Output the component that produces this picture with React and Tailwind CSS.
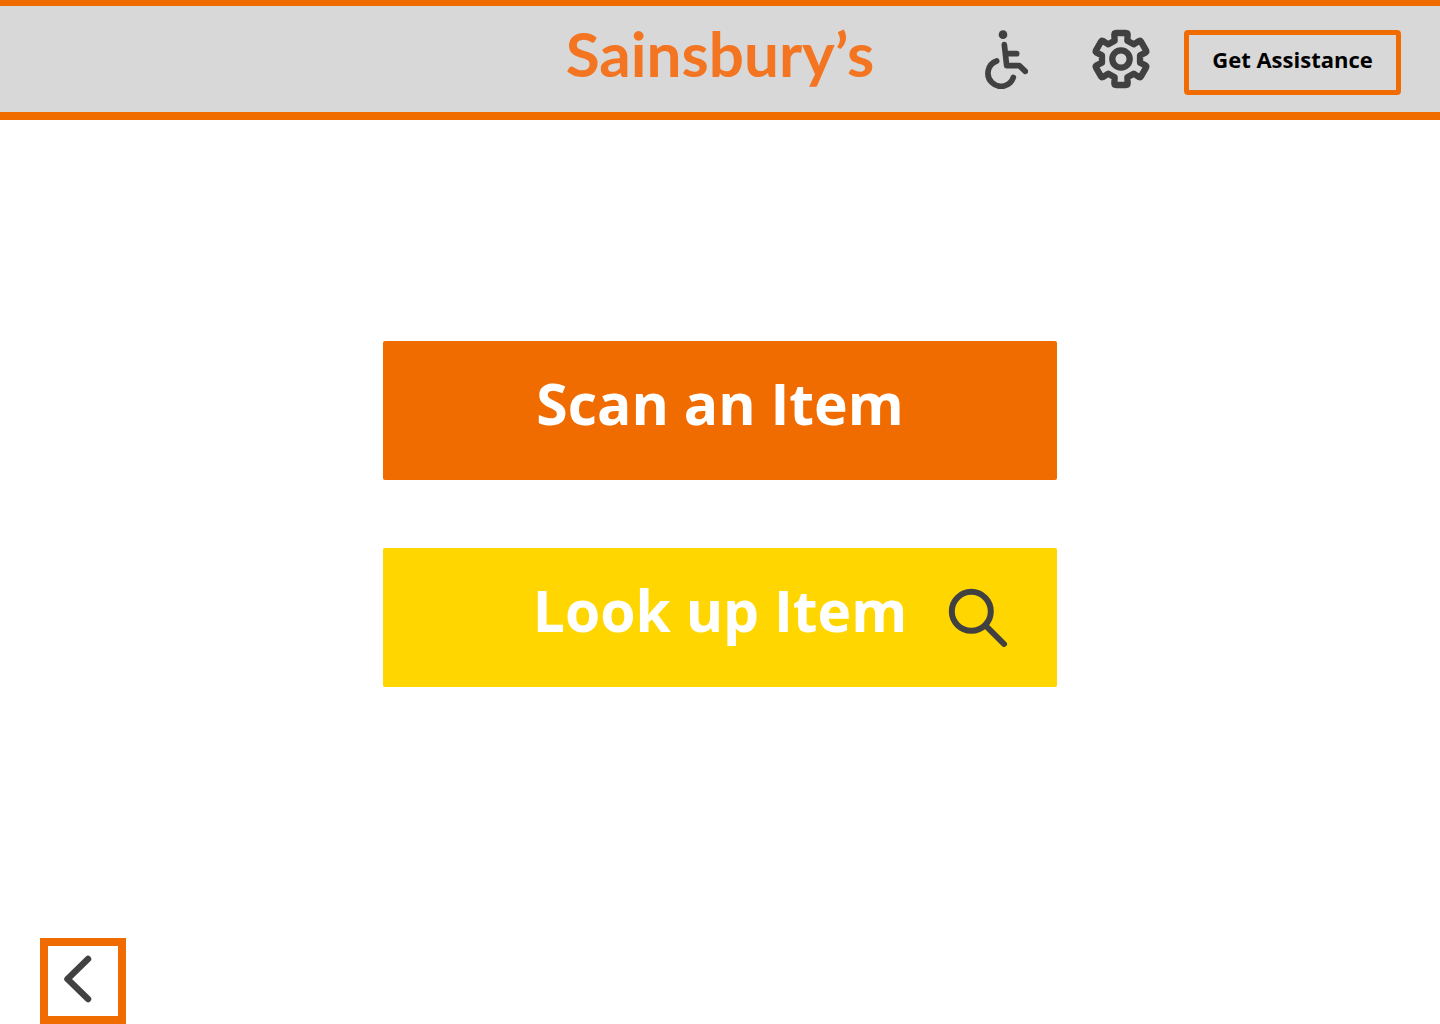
const GEAR_PATH = (() => {
  const tooth = [
    [-19, -55],
    [-20, -73],
    [-19, -77],
    [-15, -78],
    [15, -78],
    [19, -77],
    [20, -73],
    [19, -55],
  ];
  const points = [];
  for (let i = 0; i < 6; i += 1) {
    const a = (i * Math.PI) / 3;
    tooth.forEach(([x, y]) => {
      const px = x * Math.cos(a) - y * Math.sin(a);
      const py = x * Math.sin(a) + y * Math.cos(a);
      points.push(`${px.toFixed(1)} ${py.toFixed(1)}`);
    });
  }
  return `M${points.join("L")}Z`;
})();

function WheelchairIcon() {
  return (
    <svg viewBox="45 31 129 177" className="h-[59px] w-[43px]" fill="none" stroke="currentColor" strokeWidth="17" strokeLinecap="round" strokeLinejoin="round" aria-hidden="true">
      <circle cx="99" cy="45" r="13" fill="currentColor" stroke="none" />
      <path d="M103 75L110 138H148L166 155" />
      <path d="M109 102H140" />
      <path d="M80 124A39 39 0 1 0 130 173" />
    </svg>
  );
}

function GearIcon() {
  return (
    <svg viewBox="-87 -87 174 174" className="size-[58px]" overflow="visible" fill="none" stroke="currentColor" strokeWidth="19" strokeLinejoin="round" aria-hidden="true">
      <path d={GEAR_PATH} />
      <circle r="26" />
    </svg>
  );
}

function SearchIcon() {
  return (
    <svg viewBox="0 0 58 58" className="size-[58px]" overflow="visible" fill="none" stroke="currentColor" strokeWidth="6" strokeLinecap="round" aria-hidden="true">
      <circle cx="22.3" cy="22.3" r="19.5" />
      <path d="M37 37L55 55" />
    </svg>
  );
}

function ChevronLeftIcon() {
  return (
    <svg viewBox="0 0 27 48" className="h-12 w-[27px]" overflow="visible" fill="none" stroke="currentColor" strokeWidth="6.5" strokeLinecap="round" strokeLinejoin="round" aria-hidden="true">
      <path d="M24 4L3.5 24L24 44" />
    </svg>
  );
}

export default function App() {
  return (
    <div className="flex min-h-screen flex-col bg-white font-['Open_Sans',sans-serif] text-[#414141]">
      <header className="grid grid-cols-[1fr_auto_1fr] border-t-[6px] border-b-8 border-[#f06c00] bg-[#d8d8d8] px-[39px] pt-6 pb-[17px]">
        <a href="#home" className="col-start-2 font-['Lato',sans-serif] text-[62px] leading-[46px] font-bold text-[#f47521]">
          Sainsbury’s
        </a>
        <div className="flex items-start justify-end">
          <button type="button" aria-label="Accessibility" className="mr-16">
            <WheelchairIcon />
          </button>
          <button type="button" aria-label="Settings" className="mr-[34px]">
            <GearIcon />
          </button>
          <button type="button" className="h-[65px] w-[217px] rounded border-[5px] border-[#f06c00] pb-2 text-[22px] leading-7 font-bold whitespace-nowrap text-black">
            Get Assistance
          </button>
        </div>
      </header>
      <main className="flex grow flex-col items-center justify-center gap-[68px] pb-[30px]">
        <button type="button" className="h-[139px] w-full max-w-[674px] rounded-xs bg-[#f06c00] pb-4 text-[57px] leading-[72px] font-bold text-white">
          Scan an Item
        </button>
        <button type="button" className="grid h-[139px] w-full max-w-[674px] grid-cols-[1fr_auto_1fr] items-center rounded-xs bg-[#ffd600] px-[50px] text-[57px] leading-[72px] font-bold text-white">
          <span className="col-start-2 pb-4">Look up Item</span>
          <span className="justify-self-end text-[#414141]">
            <SearchIcon />
          </span>
        </button>
      </main>
      <footer className="px-10">
        <button type="button" aria-label="Back" className="flex size-[86px] items-center justify-center border-8 border-[#f06c00] pr-[11px] pb-1">
          <ChevronLeftIcon />
        </button>
      </footer>
    </div>
  );
}
